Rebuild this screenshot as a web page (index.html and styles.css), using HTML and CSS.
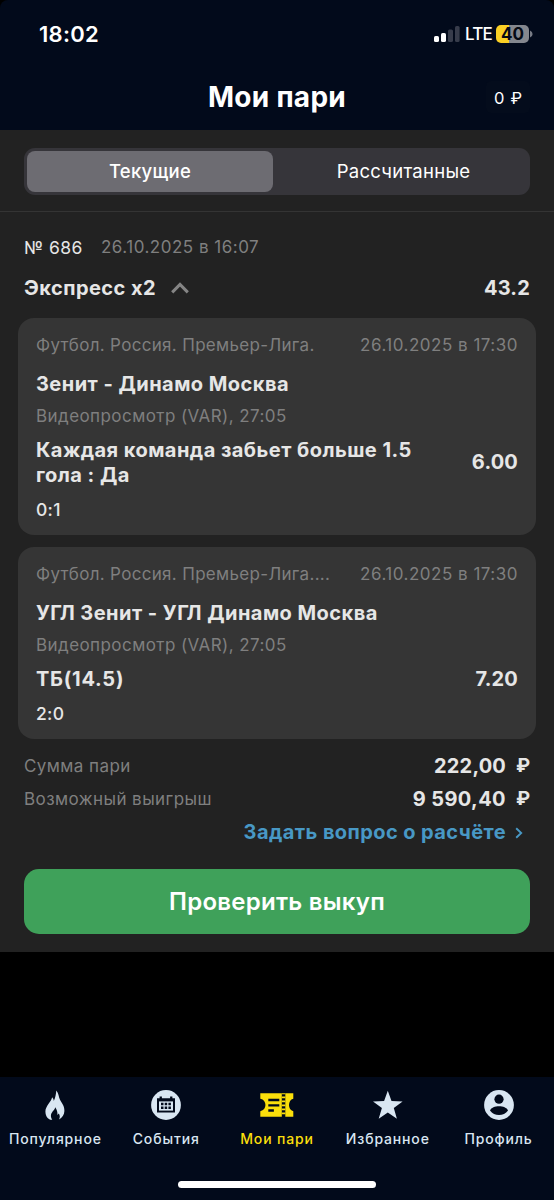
FILE: index.html
```html
<!DOCTYPE html>
<html lang="ru">
<head>
<meta charset="utf-8">
<title>Мои пари</title>
<link rel="stylesheet" href="styles.css">
</head>
<body>
<div class="app">
  <header class="header">
    <div class="status">
      <span class="clock">18:02</span>
      <div class="indicators">
        <svg class="signal" width="26" height="16" viewBox="0 0 26 16">
          <rect x="0" y="10" width="5" height="6" rx="1.6" fill="#fff"/>
          <rect x="7" y="7" width="5" height="9" rx="1.6" fill="#fff"/>
          <rect x="14" y="3.5" width="5" height="12.5" rx="1.6" fill="#373c4b"/>
          <rect x="21" y="0" width="4.6" height="16" rx="1.6" fill="#373c4b"/>
        </svg>
        <span class="network">LTE</span>
        <span class="battery">40</span>
        <svg class="battery-tip" width="3" height="8" viewBox="0 0 3 8"><path d="M0 0.5Q2.6 1.5 2.6 4T0 7.5Z" fill="#777b85"/></svg>
      </div>
    </div>
    <div class="titlebar">
      <h1 class="title">Мои пари</h1>
      <span class="balance">0 ₽</span>
    </div>
  </header>
  <main class="main">
    <div class="tabs-wrap">
      <div class="tabs">
        <div class="tab tab-active">Текущие</div>
        <div class="tab tab-settled">Рассчитанные</div>
      </div>
    </div>
    <section class="bet">
      <div class="row meta"><span class="number">№ 686</span><span class="muted date">26.10.2025 в 16:07</span></div>
      <div class="row express">
        <span class="strong">Экспресс x2</span>
        <svg class="chevron-up" width="18" height="12" viewBox="0 0 18 12"><path d="M1.2 10.4L9 2.4l7.8 8" fill="none" stroke="#858585" stroke-width="3"/></svg>
        <span class="strong push odds">43.2</span>
      </div>
      <article class="card">
        <div class="row league"><span class="muted league-name">Футбол. Россия. Премьер-Лига.</span><span class="muted push date">26.10.2025 в 17:30</span></div>
        <div class="row teams strong">Зенит - Динамо Москва</div>
        <div class="row note muted">Видеопросмотр (VAR), 27:05</div>
        <div class="row outcome"><span class="strong">Каждая команда забьет больше 1.5<br>гола : Да</span><span class="strong push odds">6.00</span></div>
        <div class="row score">0:1</div>
      </article>
      <article class="card card-second">
        <div class="row league"><span class="muted league-name">Футбол. Россия. Премьер-Лига....</span><span class="muted push date">26.10.2025 в 17:30</span></div>
        <div class="row teams strong">УГЛ Зенит - УГЛ Динамо Москва</div>
        <div class="row note muted">Видеопросмотр (VAR), 27:05</div>
        <div class="row outcome outcome-single"><span class="strong total">ТБ(14.5)</span><span class="strong push odds">7.20</span></div>
        <div class="row score">2:0</div>
      </article>
      <div class="row sum"><span class="muted">Сумма пари</span><span class="strong push odds">222,00</span><span class="strong ruble">₽</span></div>
      <div class="row sum"><span class="muted">Возможный выигрыш</span><span class="strong push odds payout">9 590,40</span><span class="strong ruble">₽</span></div>
      <div class="row question"><span class="push">Задать вопрос о расчёте</span><svg class="chevron-right" width="8" height="12" viewBox="0 0 8 12"><path d="M1.2 1.2L6.2 6l-5 4.8" fill="none" stroke="#4898c5" stroke-width="1.9"/></svg></div>
      <button class="cashout">Проверить выкуп</button>
    </section>
  </main>
  <div class="spacer"></div>
  <footer class="footer">
    <nav class="nav">
      <div class="nav-item">
        <svg class="icon" width="34" height="30" viewBox="0 0 34 30"><path d="M11.3 29.3C8.8 27.7 7.4 25 7.4 21.7C7.4 15.7 13.3 12 14.1 7.2C15.3 8.4 15.7 9.7 15.8 11.1C17.4 7.8 17.9 4.5 18.3.5C20.8 3.2 20.5 6.8 22 9.8C23.8 13.2 26.6 15.8 26.4 21C26.3 24.8 24.2 27.9 20.9 29.5C22.2 27.5 22 25.1 20.8 23.4L19.4 25C19.8 22.2 18.8 19.5 17.2 17.2C17 20 12.9 21.8 12.9 26C12.9 27.5 13.6 28.8 14.3 29.8C13.2 29.9 12.2 29.8 11.3 29.3Z"/></svg>
        <span>Популярное</span>
      </div>
      <div class="nav-item">
        <svg class="icon" width="34" height="30" viewBox="0 0 34 30"><circle cx="17" cy="15" r="14.9"/><path class="cut" d="M8 8.2h2.6V6.4h2.3v1.8h8.2V6.4h2.3v1.8H26v14.4H8Z"/><path d="M10 11.4h14v9.2H10Z"/><path class="cut" d="M12 12.7h2.5v2.5H12ZM15.7 12.7h2.5v2.5h-2.5ZM19.4 12.7h2.5v2.5h-2.5ZM12 16.5h2.5V19H12ZM15.7 16.5h2.5V19h-2.5ZM19.4 16.5h2.5V19h-2.5Z"/></svg>
        <span>События</span>
      </div>
      <div class="nav-item nav-active">
        <svg class="icon" width="34" height="30" viewBox="0 0 34 30"><path d="M.3 3.2H21.8V26.8H.3V21.2C7.2 20 7.2 10 .3 8.8ZM25.3 3.2H33.3V8.8C27.6 10 27.6 20 33.3 21.2V26.8H25.3Z"/><path d="M21.8 3.2h3.5v1h-3.5ZM21.8 6.6h3.5v1.7h-3.5ZM21.8 10.6h3.5v1.7h-3.5ZM21.8 14.6h3.5v1.7h-3.5ZM21.8 18.6h3.5v1.7h-3.5ZM21.8 22.6h3.5v1.7h-3.5Z"/><path class="cut" d="M8.3 8.8h11v2.4h-11ZM8.3 14.2h11v2.4h-11ZM8.3 19.3h5.6v2.4H8.3Z"/></svg>
        <span>Мои пари</span>
      </div>
      <div class="nav-item">
        <svg class="icon" width="34" height="30" viewBox="0 0 34 30"><path d="M16.8.8L20.5 11 31.6 11.4 22.8 18.1 25.9 28.7 16.8 22.5 7.7 28.7 10.9 18.1 2 11.4 13.1 11Z"/></svg>
        <span>Избранное</span>
      </div>
      <div class="nav-item">
        <svg class="icon" width="34" height="30" viewBox="0 0 34 30"><circle cx="17" cy="15" r="14.9"/><circle class="cut" cx="17" cy="9.2" r="4.6"/><path class="cut" d="M8 20.5C10.2 14.9 23.8 14.9 26 20.5C21.8 26.5 12.2 26.5 8 20.5Z"/></svg>
        <span>Профиль</span>
      </div>
    </nav>
    <div class="home-bar"></div>
  </footer>
</div>
</body>
</html>
```

FILE: styles.css
```css
* { box-sizing: border-box; }
body { margin: 0; background: #000; font-family: Inter, "Noto Sans", sans-serif; }
.app { width: 554px; height: 1200px; display: flex; flex-direction: column; background: #000; color: #e6e6e6; }
.header { height: 130px; background: #020a1b; border-radius: 8px 8px 0 0; color: #fff; }
.status { height: 68px; display: flex; align-items: center; justify-content: space-between; padding: 0 21px 0 39px; }
.clock { font-size: 22px; font-weight: 600; letter-spacing: 0.3px; }
.indicators { display: flex; align-items: center; }
.network { font-size: 17px; font-weight: 500; letter-spacing: -0.8px; margin-left: 5px; width: 31px; }
.battery { width: 33px; height: 18px; border-radius: 5px; background: linear-gradient(90deg, #fbd024 40%, #84878e 40%); color: #050a14; font-size: 17px; line-height: 18px; font-weight: 700; text-align: center; letter-spacing: 0; }
.battery-tip { margin-left: 1px; }
.titlebar { height: 58px; display: grid; grid-template-columns: 1fr auto 1fr; align-items: center; padding: 0 24px; }
.title { grid-column: 2; margin: 0; font-size: 28px; font-weight: 700; line-height: 34px; letter-spacing: 0.3px; }
.balance { justify-self: end; width: 44px; height: 32px; line-height: 34px; border-radius: 5px; background: #040c1c; text-align: center; font-size: 16.5px; word-spacing: 1.5px; }
.main { height: 822px; background: #222; }
.tabs-wrap { height: 82px; padding: 18px 24px 0; border-bottom: 1px solid #343434; }
.tabs { height: 47px; padding: 3px; display: grid; grid-template-columns: 246px 1fr; border-radius: 11px; background: #36353a; color: #fff; }
.tab { display: flex; align-items: center; justify-content: center; border-radius: 8px; padding-bottom: 1px; font-size: 18.5px; letter-spacing: 0.27px; }
.tab-active { background: #6d6c72; font-weight: 500; }
.tab-settled { padding-left: 7px; }
.bet { padding: 16px 24px 0; }
.row { display: flex; align-items: center; white-space: nowrap; font-size: 17px; }
.push { margin-left: auto; }
.strong { font-size: 20px; font-weight: 700; letter-spacing: 0.46px; }
.odds { letter-spacing: 0.18px; }
.payout { letter-spacing: 0.4px; }
.total { letter-spacing: 0.75px; }
.muted { color: #7f7f7f; letter-spacing: 0.43px; }
.date { letter-spacing: 0.5px; }
.league-name { letter-spacing: 0.32px; }
.meta { height: 38px; }
.number { width: 77px; font-size: 17.5px; letter-spacing: 0.45px; }
.express { height: 44px; }
.chevron-up { margin-left: 15px; }
.card { height: 217px; margin: 8px -6px 0; padding: 9px 18px 0; border-radius: 16px; background: #353535; }
.card-second { height: 192px; margin-top: 12px; margin-bottom: 10px; }
.league { height: 36px; }
.teams { height: 42px; }
.note { height: 22px; }
.outcome { height: 71px; line-height: 25px; }
.outcome-single { height: 46px; }
.score { height: 23px; font-size: 17.5px; font-weight: 500; letter-spacing: 0.3px; }
.sum { height: 33px; }
.ruble { width: 24px; text-align: right; letter-spacing: 0; font-size: 19px; }
.question { height: 33px; padding-right: 7px; gap: 9px; color: #4898c5; font-size: 20px; font-weight: 700; letter-spacing: 0.42px; }
.chevron-right { margin-top: 3px; }
.cashout { display: block; width: 100%; height: 65px; margin-top: 21px; padding: 0; border: 0; border-radius: 15px; background: #3fa15a; color: #fff; font-family: inherit; font-size: 24px; font-weight: 600; letter-spacing: 0.25px; }
.spacer { height: 125px; }
.footer { height: 123px; background: #020a1b; }
.nav { height: 104px; display: grid; grid-template-columns: repeat(5, 1fr); }
.nav-item { display: flex; flex-direction: column; align-items: center; padding-top: 13px; color: #d9e6f2; font-size: 14px; font-weight: 450; line-height: 20px; letter-spacing: 0.85px; gap: 9px; }
.nav-active { color: #fbdf0b; }
.icon { fill: currentColor; }
.cut { fill: #020a1b; }
.home-bar { width: 198px; height: 7px; margin: 0 auto; border-radius: 4px; background: #fff; }
```
